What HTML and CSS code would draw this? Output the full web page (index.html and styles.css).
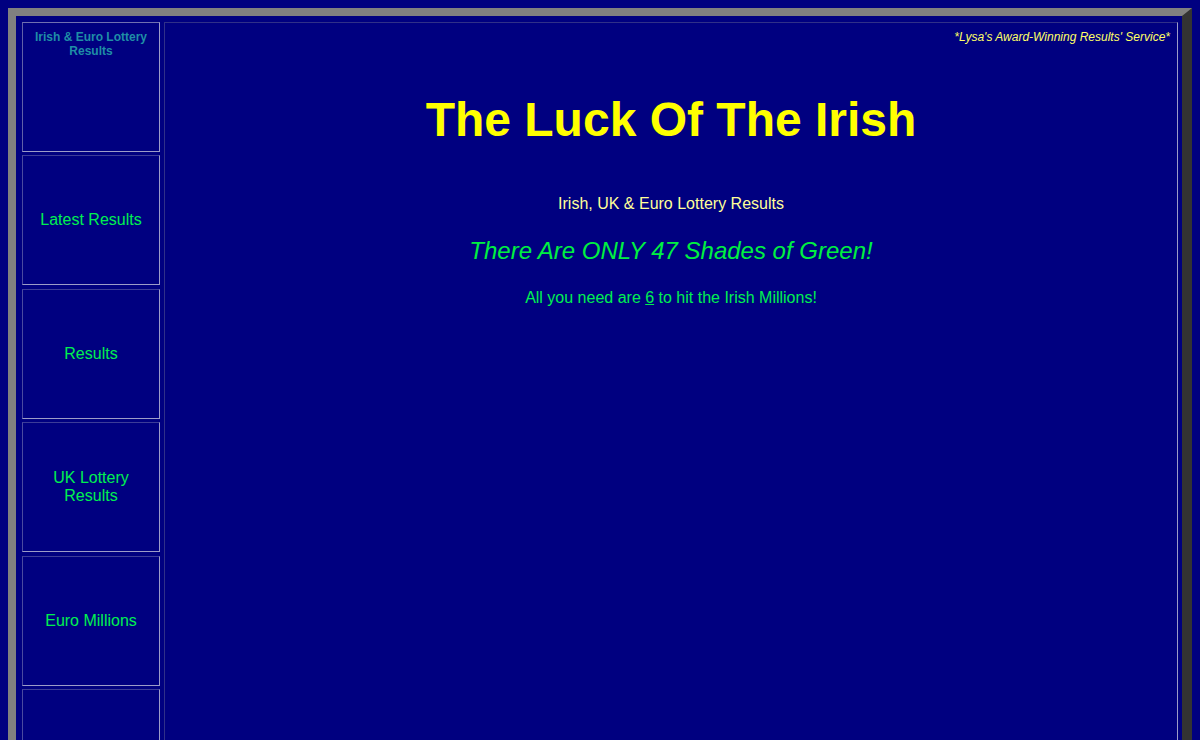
FILE: index.html
```html
<!DOCTYPE html>
<html>
<head>
<meta charset="utf-8">
<title>The Luck Of The Irish</title>
<link rel="stylesheet" href="styles.css">
</head>
<body>
<div class="frame">
  <div class="layout">
    <nav class="side">
      <div class="cell cell-brand"><span class="brand">Irish &amp; Euro Lottery Results</span></div>
      <div class="cell"><span class="nav-link">Latest Results</span></div>
      <div class="cell"><span class="nav-link">Results</span></div>
      <div class="cell"><span class="nav-link">UK Lottery<br>Results</span></div>
      <div class="cell"><span class="nav-link">Euro Millions</span></div>
      <div class="cell"></div>
    </nav>
    <main class="main">
      <p class="tagline">*Lysa's Award-Winning Results' Service*</p>
      <h1 class="title">The Luck Of The Irish</h1>
      <p class="subtitle">Irish, UK &amp; Euro Lottery Results</p>
      <p class="shades">There Are ONLY 47 Shades of Green!</p>
      <p class="need">All you need are <a class="six" href="#">6</a> to hit the Irish Millions!</p>
    </main>
  </div>
</div>
</body>
</html>
```

FILE: styles.css
```css
html, body {
  margin: 0;
  padding: 0;
  background: #000080;
}
body {
  padding: 8px;
  font-family: "Liberation Sans", Arial, sans-serif;
  height: 740px;
  box-sizing: border-box;
  overflow: hidden;
}
.frame {
  border-style: solid;
  border-width: 8px 10px 8px 8px;
  border-color: #808080 #333333 #333333 #808080;
  height: 900px;
  box-sizing: border-box;
}
.layout {
  display: flex;
  gap: 4px;
  padding: 6px 4px 0 6px;
  height: 100%;
  box-sizing: border-box;
}
.side {
  width: 138px;
  flex: none;
  display: flex;
  flex-direction: column;
  gap: 3.4px;
}
.cell {
  height: 130px;
  flex: none;
  box-sizing: border-box;
  border: 1px solid;
  border-color: #3c3c98 #9c9cc8 #9c9cc8 #4a4aa0;
  display: flex;
  align-items: center;
  justify-content: center;
  text-align: center;
}
.cell-brand {
  align-items: flex-start;
  padding-top: 7px;
  border-color: #7070b0 #9c9cc8 #9c9cc8 #6060a8;
}
.brand {
  color: #1f8ea6;
  font-weight: bold;
  font-size: 12px;
  line-height: 14px;
  width: 120px;
}
.nav-link {
  color: #00f050;
  font-size: 16px;
  line-height: 18px;
}
.main {
  flex: 1;
  box-sizing: border-box;
  border: 1px solid;
  border-color: #303088 #9c9cc8 #9c9cc8 #303088;
  padding: 7px 7px 0 7px;
  text-align: center;
}
.tagline {
  margin: 0;
  text-align: right;
  font-style: italic;
  font-size: 12px;
  line-height: 14px;
  color: #ffff66;
}
.title {
  margin: 48px 0 0;
  font-size: 48px;
  line-height: 56px;
  font-weight: bold;
  color: #ffff00;
}
.subtitle {
  margin: 47px 0 0;
  font-size: 16px;
  line-height: 18px;
  color: #ffff99;
}
.shades {
  margin: 24px 0 0;
  font-size: 24px;
  line-height: 28px;
  font-style: italic;
  color: #00f040;
}
.need {
  margin: 24px 0 0;
  font-size: 16px;
  line-height: 18px;
  color: #00f050;
}
.six {
  color: #00f050;
  text-decoration: underline;
}
```
